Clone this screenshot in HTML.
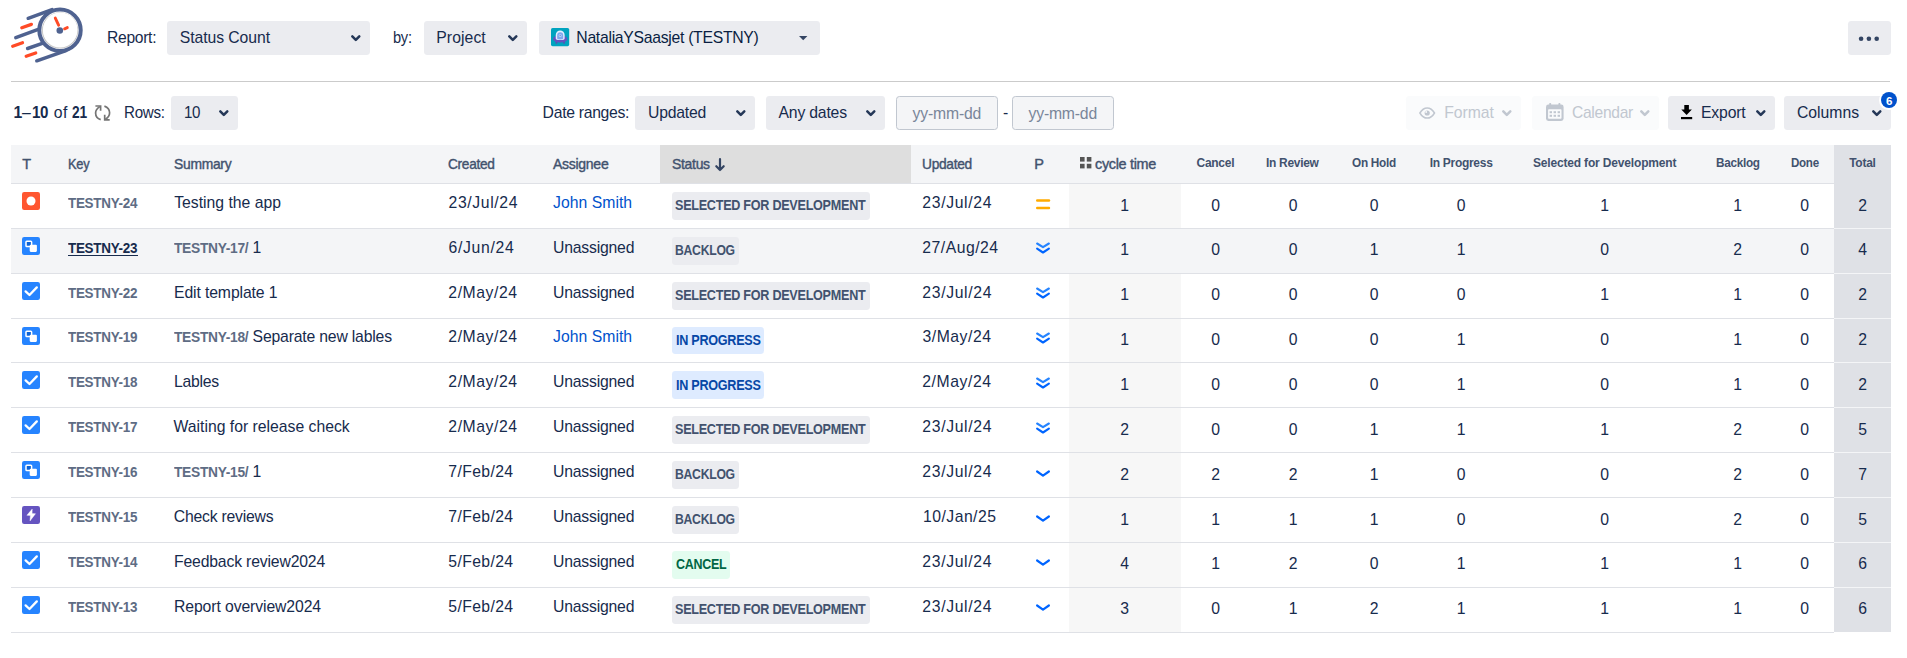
<!DOCTYPE html>
<html lang="en">
<head>
<meta charset="utf-8">
<title>Time in Status - Status Count</title>
<style>
html,body{margin:0;padding:0;background:#fff;}
body{width:1907px;height:658px;position:relative;overflow:hidden;font-family:"Liberation Sans",Arial,sans-serif;color:#172B4D;font-size:15.75px;}
.t{position:absolute;white-space:pre;line-height:20px;margin:0;padding:0;font-weight:400;transform-origin:0 50%;}
.box{position:absolute;box-sizing:border-box;border-radius:3.4px;}
.sel{background:#EBECF0;}
.dis{background:#FAFBFC;}
.inp{background:#F4F5F7;border:1.1px solid #C1C7D0;}
svg{position:absolute;overflow:visible;}
.abs{position:absolute;}
a{text-decoration:none;color:inherit;}
</style>
</head>
<body>

<svg class="logo" style="left:0;top:0" width="120" height="90" viewBox="0 0 120 90" fill="none" stroke-linecap="round">
<g stroke="#4F6290" stroke-width="3.5">
<line x1="28.2" y1="18.3" x2="52" y2="9.6"/>
<line x1="15.8" y1="37.6" x2="38.2" y2="29.4"/>
<line x1="27.6" y1="48.5" x2="42.3" y2="43.4"/>
<line x1="36.8" y1="60.8" x2="66" y2="50.6"/>
</g>
<g stroke="#FF4B26" stroke-width="3.3">
<line x1="21.8" y1="27.7" x2="31.4" y2="24.4"/>
<line x1="12.7" y1="46.2" x2="22.5" y2="42.8"/>
<line x1="26.2" y1="56.3" x2="35.7" y2="53"/>
</g>
<circle cx="60" cy="30.4" r="17.6" fill="#fff" stroke="#C9C9C9" stroke-width="1.2"/>
<circle cx="60.3" cy="29.6" r="17.2" fill="#fff" stroke="none"/>
<circle cx="60" cy="30.3" r="20.7" stroke="#4F6290" stroke-width="4"/>
<line x1="55.3" y1="18.1" x2="58.6" y2="25.2" stroke="#FF4B26" stroke-width="2.9"/>
<line x1="64.6" y1="28.8" x2="67.3" y2="27.6" stroke="#FF4B26" stroke-width="2.9"/>
<circle cx="59.8" cy="30.5" r="3.3" fill="#4F6290" stroke="none"/>
</svg>

<div class="toolbar">
<label class="t" style="left:106.50px;top:27.75px;font-size:15.75px;letter-spacing:-0.300px;transform:scaleX(0.9928);">Report:</label>
<div class="box sel" style="left:167px;top:21px;width:203px;height:33.8px"></div>
<span class="t" style="left:179.70px;top:27.75px;font-size:15.75px;letter-spacing:-0.067px;">Status Count</span>
<svg style="left:350.80px;top:34.90px" width="9.8" height="6.6" fill="none"><polyline points="1.3,1.3 4.8,4.9 8.3,1.3" stroke="#253858" stroke-width="2.5" stroke-linecap="round" stroke-linejoin="round"/></svg>
<label class="t" style="left:393.00px;top:27.75px;font-size:15.75px;letter-spacing:-0.300px;transform:scaleX(0.9302);">by:</label>
<div class="box sel" style="left:424px;top:21px;width:103px;height:33.8px"></div>
<span class="t" style="left:436.30px;top:27.75px;font-size:15.75px;letter-spacing:0.070px;">Project</span>
<svg style="left:508.30px;top:34.90px" width="9.8" height="6.6" fill="none"><polyline points="1.3,1.3 4.8,4.9 8.3,1.3" stroke="#253858" stroke-width="2.5" stroke-linecap="round" stroke-linejoin="round"/></svg>
<div class="box sel" style="left:539.2px;top:21px;width:280.8px;height:33.8px"></div>
<svg style="left:551px;top:28.1px" width="18.2" height="18.2" viewBox="0 0 18 18">
<rect width="18" height="18" rx="1.6" fill="#00A3BF"/>
<rect x="4.6" y="12.6" width="1.6" height="2.9" rx="0.5" fill="#5E4DB2"/><rect x="12.1" y="12.6" width="1.6" height="2.9" rx="0.5" fill="#5E4DB2"/>
<ellipse cx="9.1" cy="10.7" rx="7.1" ry="3.5" fill="#6554C0"/>
<path d="M4.7 10.4 V6.9 a4.4 4.4 0 0 1 8.8 0 V10.4 a4.4 1.5 0 0 1 -8.8 0 Z" fill="#E4EEFF"/>
<path d="M6.1 10.5 V7.2 a3 3 0 0 1 6 0 V10.5 a3 1 0 0 1 -6 0 Z" fill="#7FA8EE"/>
<circle cx="9.1" cy="7.4" r="1.5" fill="#B9D2FA"/><circle cx="9.1" cy="7.4" r="0.6" fill="#5B84D6"/>
<path d="M2 10.9 a7.1 3.4 0 0 0 14.2 0 a7.1 2 0 0 1 -14.2 0 Z" fill="#6554C0"/>
</svg>
<span class="t" style="left:576.30px;top:27.75px;font-size:15.75px;color:#091E42;letter-spacing:-0.286px;">NataliaYSaasjet (TESTNY)</span>
<svg style="left:799px;top:36px" width="8.4" height="4.4"><polygon points="0,0 8.4,0 4.2,4.3" fill="#344563"/></svg>
<div class="box sel" style="left:1848px;top:21px;width:42.5px;height:33.8px"></div>
<svg style="left:1858px;top:35.6px" width="22" height="6"><circle cx="3.1" cy="2.8" r="2.3" fill="#344563"/><circle cx="10.9" cy="2.8" r="2.3" fill="#344563"/><circle cx="18.7" cy="2.8" r="2.3" fill="#344563"/></svg>
</div>
<div class="abs" style="left:11.2px;top:80.6px;width:1879.3px;height:1.3px;background:#CBCBCB"></div>
<div class="controls">
<span class="pager">
<b class="t" style="left:13.40px;top:102.75px;font-size:15.75px;font-weight:700;">1</b>
<span class="t" style="left:21.90px;top:102.75px;font-size:15.75px;">–</span>
<b class="t" style="left:32.30px;top:102.75px;font-size:15.75px;font-weight:700;letter-spacing:-0.300px;transform:scaleX(0.9603);">10</b>
<span class="t" style="left:53.70px;top:102.75px;font-size:15.75px;letter-spacing:0.549px;">of</span>
<b class="t" style="left:72.00px;top:102.75px;font-size:15.75px;font-weight:700;letter-spacing:-0.300px;transform:scaleX(0.8730);">21</b>
</span>
<svg style="left:93px;top:104px" width="20" height="18" viewBox="93 104 20 18" fill="none" stroke="#757575" stroke-width="1.7">
<path d="M100.7 119.6 C97.6 118.6 95.6 116.2 95.6 112.9 C95.6 110.3 97.2 108.3 99.8 106.6"/>
<path d="M95.4 106 H100.6 V110.8"/>
<path d="M104.4 106.1 C107.6 107.3 109.6 109.7 109.6 112.8 C109.6 115.5 108.2 117.6 105.4 119.3"/>
<path d="M104.7 114.8 V119.8 H109.7"/>
</svg>
<label class="t" style="left:123.70px;top:102.75px;font-size:15.75px;letter-spacing:-0.300px;transform:scaleX(0.9628);">Rows:</label>
<div class="box sel" style="left:171px;top:96px;width:67px;height:33.8px"></div>
<span class="t" style="left:183.60px;top:102.75px;font-size:15.75px;letter-spacing:-0.300px;transform:scaleX(0.9603);">10</span>
<svg style="left:219.10px;top:109.90px" width="9.8" height="6.6" fill="none"><polyline points="1.3,1.3 4.8,4.9 8.3,1.3" stroke="#253858" stroke-width="2.5" stroke-linecap="round" stroke-linejoin="round"/></svg>
<label class="t" style="left:542.60px;top:102.75px;font-size:15.75px;letter-spacing:-0.300px;">Date ranges:</label>
<div class="box sel" style="left:635px;top:96px;width:120px;height:33.8px"></div>
<span class="t" style="left:648.00px;top:102.75px;font-size:15.75px;letter-spacing:-0.222px;">Updated</span>
<svg style="left:735.70px;top:109.90px" width="9.8" height="6.6" fill="none"><polyline points="1.3,1.3 4.8,4.9 8.3,1.3" stroke="#253858" stroke-width="2.5" stroke-linecap="round" stroke-linejoin="round"/></svg>
<div class="box sel" style="left:766px;top:96px;width:118.7px;height:33.8px"></div>
<span class="t" style="left:778.50px;top:102.75px;font-size:15.75px;letter-spacing:-0.189px;">Any dates</span>
<svg style="left:866.00px;top:109.90px" width="9.8" height="6.6" fill="none"><polyline points="1.3,1.3 4.8,4.9 8.3,1.3" stroke="#253858" stroke-width="2.5" stroke-linecap="round" stroke-linejoin="round"/></svg>
<div class="box inp" style="left:896px;top:96px;width:101.8px;height:33.8px"></div>
<span class="t" style="left:912.60px;top:103.75px;font-size:15.75px;color:#7A869A;letter-spacing:-0.187px;">yy-mm-dd</span>
<span class="t" style="left:1003.00px;top:102.75px;font-size:15.75px;">-</span>
<div class="box inp" style="left:1012px;top:96px;width:102px;height:33.8px"></div>
<span class="t" style="left:1028.50px;top:103.75px;font-size:15.75px;color:#7A869A;letter-spacing:-0.187px;">yy-mm-dd</span>
<div class="box dis" style="left:1406.2px;top:96px;width:114.7px;height:33.8px"></div>
<svg style="left:1419px;top:106.5px" width="16.4" height="12" viewBox="0 0 16.4 12" fill="none">
<path d="M0.9 6 C3 2.4 5.4 0.9 8.2 0.9 C11 0.9 13.4 2.4 15.5 6 C13.4 9.6 11 11.1 8.2 11.1 C5.4 11.1 3 9.6 0.9 6 Z" stroke="#C1C7D0" stroke-width="1.5"/>
<circle cx="8.2" cy="6" r="2.6" fill="#C1C7D0"/><circle cx="7.2" cy="5" r="0.9" fill="#FAFBFC"/></svg>
<span class="t" style="left:1444.30px;top:102.75px;font-size:15.75px;color:#C1C7D0;letter-spacing:-0.070px;">Format</span>
<svg style="left:1501.80px;top:109.90px" width="9.8" height="6.6" fill="none"><polyline points="1.3,1.3 4.8,4.9 8.3,1.3" stroke="#C1C7D0" stroke-width="2.5" stroke-linecap="round" stroke-linejoin="round"/></svg>
<div class="box dis" style="left:1532px;top:96px;width:127px;height:33.8px"></div>
<svg style="left:1545.6px;top:103px" width="17.6" height="18" viewBox="0 0 17.6 18">
<rect x="0" y="1.6" width="17.6" height="16.4" rx="2.4" fill="#C1C7D0"/>
<rect x="3.2" y="0" width="2" height="3.4" rx="0.8" fill="#C1C7D0"/><rect x="12.4" y="0" width="2" height="3.4" rx="0.8" fill="#C1C7D0"/>
<rect x="2.1" y="6.2" width="13.4" height="9.6" rx="0.8" fill="#FAFBFC"/>
<g fill="#C1C7D0"><rect x="3.6" y="8.2" width="2.4" height="2"/><rect x="7.6" y="8.2" width="2.4" height="2"/><rect x="11.6" y="8.2" width="2.4" height="2"/>
<rect x="3.6" y="11.8" width="2.4" height="2"/><rect x="7.6" y="11.8" width="2.4" height="2"/><rect x="11.6" y="11.8" width="2.4" height="2"/></g></svg>
<span class="t" style="left:1571.70px;top:102.75px;font-size:15.75px;color:#C1C7D0;letter-spacing:-0.300px;transform:scaleX(0.9912);">Calendar</span>
<svg style="left:1640.30px;top:109.90px" width="9.8" height="6.6" fill="none"><polyline points="1.3,1.3 4.8,4.9 8.3,1.3" stroke="#C1C7D0" stroke-width="2.5" stroke-linecap="round" stroke-linejoin="round"/></svg>
<div class="box sel" style="left:1668.2px;top:96px;width:106.8px;height:33.8px"></div>
<svg style="left:1681px;top:105.2px" width="11.2" height="14.4" viewBox="0 0 11.2 14.4" fill="#000">
<polygon points="3.3,0 7.9,0 7.9,4.6 10.9,4.6 5.6,9.9 0.3,4.6 3.3,4.6"/><rect x="0" y="12" width="11.2" height="2.2"/></svg>
<span class="t" style="left:1701.00px;top:102.75px;font-size:15.75px;letter-spacing:-0.163px;">Export</span>
<svg style="left:1756.40px;top:109.90px" width="9.8" height="6.6" fill="none"><polyline points="1.3,1.3 4.8,4.9 8.3,1.3" stroke="#253858" stroke-width="2.5" stroke-linecap="round" stroke-linejoin="round"/></svg>
<div class="box sel" style="left:1784px;top:96px;width:106.8px;height:33.8px"></div>
<span class="t" style="left:1797.00px;top:102.75px;font-size:15.75px;letter-spacing:-0.022px;">Columns</span>
<svg style="left:1872.00px;top:109.90px" width="9.8" height="6.6" fill="none"><polyline points="1.3,1.3 4.8,4.9 8.3,1.3" stroke="#253858" stroke-width="2.5" stroke-linecap="round" stroke-linejoin="round"/></svg>
<div class="abs" style="left:1879.4px;top:90.5px;width:19.2px;height:19.2px;border-radius:50%;background:#fff"></div>
<div class="abs" style="left:1880.8px;top:91.9px;width:16.4px;height:16.4px;border-radius:50%;background:#0052CC"></div>
<span class="t" style="left:1885.88px;top:91.25px;font-size:11.6px;font-weight:700;color:#fff;">6</span>
</div>
<div class="grid" role="table">
<div class="abs" style="left:11.0px;top:145px;width:1879.8px;height:38px;background:#F4F5F7"></div>
<div class="abs" style="left:11.0px;top:183px;width:1879.8px;height:1px;background:#DFE1E6"></div>
<div class="abs" style="left:660.1px;top:145px;width:250.8px;height:38px;background:#DEDEDE"></div>
<div class="abs" style="left:1069px;top:184px;width:111.8px;height:448px;background:#F7F7F7"></div>
<div class="abs" style="left:11.0px;top:229px;width:1879.8px;height:44px;background:#F4F5F7"></div>
<div class="abs" style="left:11.0px;top:228px;width:1879.8px;height:1px;background:#DFE1E6"></div>
<div class="abs" style="left:11.0px;top:273px;width:1879.8px;height:1px;background:#DFE1E6"></div>
<div class="abs" style="left:11.0px;top:318px;width:1879.8px;height:1px;background:#DFE1E6"></div>
<div class="abs" style="left:11.0px;top:362px;width:1879.8px;height:1px;background:#DFE1E6"></div>
<div class="abs" style="left:11.0px;top:407px;width:1879.8px;height:1px;background:#DFE1E6"></div>
<div class="abs" style="left:11.0px;top:452px;width:1879.8px;height:1px;background:#DFE1E6"></div>
<div class="abs" style="left:11.0px;top:497px;width:1879.8px;height:1px;background:#DFE1E6"></div>
<div class="abs" style="left:11.0px;top:542px;width:1879.8px;height:1px;background:#DFE1E6"></div>
<div class="abs" style="left:11.0px;top:587px;width:1879.8px;height:1px;background:#DFE1E6"></div>
<div class="abs" style="left:11.0px;top:632px;width:1823.0px;height:1px;background:#DFE1E6"></div>
<div class="abs" style="left:1834px;top:145px;width:56.8px;height:487px;background:#DFE1E6"></div>
<div class="abs" style="left:1834px;top:228px;width:56.8px;height:1px;background:#F4F5F7"></div>
<div class="abs" style="left:1834px;top:273px;width:56.8px;height:1px;background:#F4F5F7"></div>
<div class="abs" style="left:1834px;top:318px;width:56.8px;height:1px;background:#F4F5F7"></div>
<div class="abs" style="left:1834px;top:362px;width:56.8px;height:1px;background:#F4F5F7"></div>
<div class="abs" style="left:1834px;top:407px;width:56.8px;height:1px;background:#F4F5F7"></div>
<div class="abs" style="left:1834px;top:452px;width:56.8px;height:1px;background:#F4F5F7"></div>
<div class="abs" style="left:1834px;top:497px;width:56.8px;height:1px;background:#F4F5F7"></div>
<div class="abs" style="left:1834px;top:542px;width:56.8px;height:1px;background:#F4F5F7"></div>
<div class="abs" style="left:1834px;top:587px;width:56.8px;height:1px;background:#F4F5F7"></div>
<span class="t" style="left:22.20px;top:154.25px;font-size:14.5px;color:#42526E;-webkit-text-stroke:0.4px #42526E;">T</span>
<span class="t" style="left:68.30px;top:154.25px;font-size:14.5px;color:#42526E;letter-spacing:-0.300px;transform:scaleX(0.8848);-webkit-text-stroke:0.4px #42526E;">Key</span>
<span class="t" style="left:173.60px;top:154.25px;font-size:14.5px;color:#42526E;letter-spacing:-0.300px;transform:scaleX(0.9559);-webkit-text-stroke:0.4px #42526E;">Summary</span>
<span class="t" style="left:448.00px;top:154.25px;font-size:14.5px;color:#42526E;letter-spacing:-0.300px;transform:scaleX(0.9434);-webkit-text-stroke:0.4px #42526E;">Created</span>
<span class="t" style="left:552.70px;top:154.25px;font-size:14.5px;color:#42526E;letter-spacing:-0.300px;transform:scaleX(0.9676);-webkit-text-stroke:0.4px #42526E;">Assignee</span>
<span class="t" style="left:672.20px;top:154.25px;font-size:14.5px;color:#42526E;letter-spacing:-0.300px;transform:scaleX(0.9619);-webkit-text-stroke:0.4px #42526E;">Status</span>
<svg style="left:714.6px;top:157.6px" width="10" height="14" viewBox="0 0 10 14" fill="none" stroke="#344563" stroke-width="2.2" stroke-linecap="round" stroke-linejoin="round"><path d="M5 1.2 V12 M1.3 8.2 L5 12 L8.7 8.2"/></svg>
<span class="t" style="left:922.40px;top:154.25px;font-size:14.5px;color:#42526E;letter-spacing:-0.300px;transform:scaleX(0.9470);-webkit-text-stroke:0.4px #42526E;">Updated</span>
<span class="t" style="left:1034.30px;top:154.25px;font-size:14.5px;color:#42526E;-webkit-text-stroke:0.4px #42526E;">P</span>
<svg style="left:1079.9px;top:157.1px" width="11.4" height="11.4" viewBox="0 0 11.4 11.4" fill="#555"><rect x="0" y="0" width="4.6" height="4.6"/><rect x="6.8" y="0" width="4.6" height="4.6"/><rect x="0" y="6.8" width="4.6" height="4.6"/><rect x="6.8" y="6.8" width="4.6" height="4.6"/></svg>
<span class="t" style="left:1095.00px;top:154.25px;font-size:14.5px;color:#42526E;letter-spacing:-0.300px;transform:scaleX(0.9927);-webkit-text-stroke:0.4px #42526E;">cycle time</span>
<span class="t" style="left:1196.50px;top:153.25px;font-size:12px;font-weight:700;color:#42526E;letter-spacing:-0.272px;">Cancel</span>
<span class="t" style="left:1266.30px;top:153.25px;font-size:12px;font-weight:700;color:#42526E;letter-spacing:-0.300px;transform:scaleX(0.9985);">In Review</span>
<span class="t" style="left:1352.20px;top:153.25px;font-size:12px;font-weight:700;color:#42526E;letter-spacing:-0.300px;transform:scaleX(0.9826);">On Hold</span>
<span class="t" style="left:1429.70px;top:153.25px;font-size:12px;font-weight:700;color:#42526E;letter-spacing:-0.290px;">In Progress</span>
<span class="t" style="left:1532.90px;top:153.25px;font-size:12px;font-weight:700;color:#42526E;letter-spacing:-0.163px;">Selected for Development</span>
<span class="t" style="left:1715.60px;top:153.25px;font-size:12px;font-weight:700;color:#42526E;letter-spacing:-0.300px;transform:scaleX(0.9804);">Backlog</span>
<span class="t" style="left:1790.70px;top:153.25px;font-size:12px;font-weight:700;color:#42526E;letter-spacing:-0.300px;transform:scaleX(0.9656);">Done</span>
<span class="t" style="left:1849.20px;top:153.25px;font-size:12px;font-weight:700;color:#42526E;letter-spacing:-0.270px;">Total</span>
<div class="row" role="row">
<svg style="left:22.00px;top:192.05px" width="18" height="18" viewBox="0 0 18 18"><rect width="18" height="18" rx="2.2" fill="#FF5630"/><circle cx="9" cy="9" r="4.5" fill="#fff"/></svg>
<a class="t" style="left:68.40px;top:193.25px;font-size:14px;font-weight:700;color:#5E6C84;letter-spacing:-0.300px;transform:scaleX(0.9614);">TESTNY-24</a>
<span class="t" style="left:174.20px;top:192.75px;font-size:15.75px;letter-spacing:-0.005px;">Testing the app</span>
<span class="t" style="left:448.50px;top:192.75px;font-size:15.75px;letter-spacing:0.632px;">23/Jul/24</span>
<a class="t" style="left:553.10px;top:192.75px;font-size:15.75px;color:#0052CC;letter-spacing:0.019px;">John Smith</a>
<div class="box" style="left:672px;top:192.05px;width:198px;height:27.9px;background:#EBECF0"></div>
<span class="t" style="left:675.10px;top:195.25px;font-size:14px;font-weight:700;color:#42526E;letter-spacing:-0.300px;transform:scaleX(0.9008);">SELECTED FOR DEVELOPMENT</span>
<span class="t" style="left:922.30px;top:192.75px;font-size:15.75px;letter-spacing:0.657px;">23/Jul/24</span>
<svg style="left:1036px;top:198.65px" width="14.4" height="11" fill="#FFAB00"><rect x="0" y="0.2" width="14.2" height="2.5" rx="1.2"/><rect x="0" y="7.8" width="14.2" height="2.5" rx="1.2"/></svg>
<span class="t" style="left:1120.13px;top:195.75px;font-size:15.75px;">1</span>
<span class="t" style="left:1211.13px;top:195.75px;font-size:15.75px;">0</span>
<span class="t" style="left:1288.63px;top:195.75px;font-size:15.75px;">0</span>
<span class="t" style="left:1369.63px;top:195.75px;font-size:15.75px;">0</span>
<span class="t" style="left:1456.63px;top:195.75px;font-size:15.75px;">0</span>
<span class="t" style="left:1600.13px;top:195.75px;font-size:15.75px;">1</span>
<span class="t" style="left:1733.13px;top:195.75px;font-size:15.75px;">1</span>
<span class="t" style="left:1800.33px;top:195.75px;font-size:15.75px;">0</span>
<span class="t" style="left:1858.13px;top:195.75px;font-size:15.75px;">2</span>
</div>
<div class="row" role="row">
<svg style="left:22.00px;top:236.90px" width="18" height="18" viewBox="0 0 18 18"><rect width="18" height="18" rx="2.2" fill="#2684FF"/><rect x="4" y="4.2" width="5.6" height="5.4" rx="0.8" fill="#0B62D6" stroke="#fff" stroke-width="1.5"/><rect x="7.7" y="7.7" width="7.2" height="7.2" rx="1.1" fill="#fff"/></svg>
<a class="t" style="left:68.40px;top:238.25px;font-size:14px;font-weight:700;color:#172B4D;letter-spacing:-0.300px;transform:scaleX(0.9614);">TESTNY-23</a>
<div class="abs" style="left:67.8px;top:254.60px;width:70.4px;height:1.2px;background:#172B4D"></div>
<a class="t" style="left:173.60px;top:238.25px;font-size:14px;font-weight:700;color:#5E6C84;letter-spacing:-0.300px;transform:scaleX(0.9841);">TESTNY-17/</a>
<span class="t" style="left:252.60px;top:237.75px;font-size:15.75px;">1</span>
<span class="t" style="left:448.50px;top:237.75px;font-size:15.75px;letter-spacing:0.686px;">6/Jun/24</span>
<span class="t" style="left:553.10px;top:237.75px;font-size:15.75px;letter-spacing:-0.207px;">Unassigned</span>
<div class="box" style="left:672px;top:236.90px;width:66.8px;height:27.9px;background:#EBECF0"></div>
<span class="t" style="left:675.40px;top:240.25px;font-size:14px;font-weight:700;color:#42526E;letter-spacing:-0.300px;transform:scaleX(0.8714);">BACKLOG</span>
<span class="t" style="left:922.30px;top:237.75px;font-size:15.75px;letter-spacing:0.485px;">27/Aug/24</span>
<svg style="left:1035px;top:241.40px" width="16" height="14" fill="none" stroke-width="2.1" stroke-linecap="round" stroke-linejoin="round"><polyline points="2.1,2.5 8,6.2 13.9,2.5" stroke="#2684FF"/><polyline points="2.1,7.6 8,11.5 13.9,7.6" stroke="#0065FF"/></svg>
<span class="t" style="left:1120.13px;top:239.75px;font-size:15.75px;">1</span>
<span class="t" style="left:1211.13px;top:239.75px;font-size:15.75px;">0</span>
<span class="t" style="left:1288.63px;top:239.75px;font-size:15.75px;">0</span>
<span class="t" style="left:1369.63px;top:239.75px;font-size:15.75px;">1</span>
<span class="t" style="left:1456.63px;top:239.75px;font-size:15.75px;">1</span>
<span class="t" style="left:1600.13px;top:239.75px;font-size:15.75px;">0</span>
<span class="t" style="left:1733.13px;top:239.75px;font-size:15.75px;">2</span>
<span class="t" style="left:1800.33px;top:239.75px;font-size:15.75px;">0</span>
<span class="t" style="left:1858.13px;top:239.75px;font-size:15.75px;">4</span>
</div>
<div class="row" role="row">
<svg style="left:22.00px;top:281.75px" width="18" height="18" viewBox="0 0 18 18"><rect width="18" height="18" rx="2.2" fill="#2684FF"/><polyline points="3.6,9.4 7.5,13 14.8,5.4" fill="none" stroke="#fff" stroke-width="2.3" stroke-linecap="round" stroke-linejoin="round"/></svg>
<a class="t" style="left:68.40px;top:283.25px;font-size:14px;font-weight:700;color:#5E6C84;letter-spacing:-0.300px;transform:scaleX(0.9614);">TESTNY-22</a>
<span class="t" style="left:174.00px;top:282.75px;font-size:15.75px;letter-spacing:-0.111px;">Edit template 1</span>
<span class="t" style="left:448.30px;top:282.75px;font-size:15.75px;letter-spacing:0.570px;">2/May/24</span>
<span class="t" style="left:553.10px;top:282.75px;font-size:15.75px;letter-spacing:-0.207px;">Unassigned</span>
<div class="box" style="left:672px;top:281.75px;width:198px;height:27.9px;background:#EBECF0"></div>
<span class="t" style="left:675.10px;top:285.25px;font-size:14px;font-weight:700;color:#42526E;letter-spacing:-0.300px;transform:scaleX(0.9008);">SELECTED FOR DEVELOPMENT</span>
<span class="t" style="left:922.30px;top:282.75px;font-size:15.75px;letter-spacing:0.657px;">23/Jul/24</span>
<svg style="left:1035px;top:286.25px" width="16" height="14" fill="none" stroke-width="2.1" stroke-linecap="round" stroke-linejoin="round"><polyline points="2.1,2.5 8,6.2 13.9,2.5" stroke="#2684FF"/><polyline points="2.1,7.6 8,11.5 13.9,7.6" stroke="#0065FF"/></svg>
<span class="t" style="left:1120.13px;top:284.75px;font-size:15.75px;">1</span>
<span class="t" style="left:1211.13px;top:284.75px;font-size:15.75px;">0</span>
<span class="t" style="left:1288.63px;top:284.75px;font-size:15.75px;">0</span>
<span class="t" style="left:1369.63px;top:284.75px;font-size:15.75px;">0</span>
<span class="t" style="left:1456.63px;top:284.75px;font-size:15.75px;">0</span>
<span class="t" style="left:1600.13px;top:284.75px;font-size:15.75px;">1</span>
<span class="t" style="left:1733.13px;top:284.75px;font-size:15.75px;">1</span>
<span class="t" style="left:1800.33px;top:284.75px;font-size:15.75px;">0</span>
<span class="t" style="left:1858.13px;top:284.75px;font-size:15.75px;">2</span>
</div>
<div class="row" role="row">
<svg style="left:22.00px;top:326.60px" width="18" height="18" viewBox="0 0 18 18"><rect width="18" height="18" rx="2.2" fill="#2684FF"/><rect x="4" y="4.2" width="5.6" height="5.4" rx="0.8" fill="#0B62D6" stroke="#fff" stroke-width="1.5"/><rect x="7.7" y="7.7" width="7.2" height="7.2" rx="1.1" fill="#fff"/></svg>
<a class="t" style="left:68.40px;top:327.25px;font-size:14px;font-weight:700;color:#5E6C84;letter-spacing:-0.300px;transform:scaleX(0.9614);">TESTNY-19</a>
<a class="t" style="left:173.60px;top:327.25px;font-size:14px;font-weight:700;color:#5E6C84;letter-spacing:-0.300px;transform:scaleX(0.9841);">TESTNY-18/</a>
<span class="t" style="left:252.60px;top:326.75px;font-size:15.75px;letter-spacing:-0.183px;">Separate new lables</span>
<span class="t" style="left:448.30px;top:326.75px;font-size:15.75px;letter-spacing:0.570px;">2/May/24</span>
<a class="t" style="left:553.10px;top:326.75px;font-size:15.75px;color:#0052CC;letter-spacing:0.019px;">John Smith</a>
<div class="box" style="left:672px;top:326.60px;width:91.9px;height:27.9px;background:#DEEBFF"></div>
<span class="t" style="left:675.60px;top:330.25px;font-size:14px;font-weight:700;color:#0747A6;letter-spacing:-0.300px;transform:scaleX(0.9010);">IN PROGRESS</span>
<span class="t" style="left:922.50px;top:326.75px;font-size:15.75px;letter-spacing:0.527px;">3/May/24</span>
<svg style="left:1035px;top:331.10px" width="16" height="14" fill="none" stroke-width="2.1" stroke-linecap="round" stroke-linejoin="round"><polyline points="2.1,2.5 8,6.2 13.9,2.5" stroke="#2684FF"/><polyline points="2.1,7.6 8,11.5 13.9,7.6" stroke="#0065FF"/></svg>
<span class="t" style="left:1120.13px;top:329.75px;font-size:15.75px;">1</span>
<span class="t" style="left:1211.13px;top:329.75px;font-size:15.75px;">0</span>
<span class="t" style="left:1288.63px;top:329.75px;font-size:15.75px;">0</span>
<span class="t" style="left:1369.63px;top:329.75px;font-size:15.75px;">0</span>
<span class="t" style="left:1456.63px;top:329.75px;font-size:15.75px;">1</span>
<span class="t" style="left:1600.13px;top:329.75px;font-size:15.75px;">0</span>
<span class="t" style="left:1733.13px;top:329.75px;font-size:15.75px;">1</span>
<span class="t" style="left:1800.33px;top:329.75px;font-size:15.75px;">0</span>
<span class="t" style="left:1858.13px;top:329.75px;font-size:15.75px;">2</span>
</div>
<div class="row" role="row">
<svg style="left:22.00px;top:371.45px" width="18" height="18" viewBox="0 0 18 18"><rect width="18" height="18" rx="2.2" fill="#2684FF"/><polyline points="3.6,9.4 7.5,13 14.8,5.4" fill="none" stroke="#fff" stroke-width="2.3" stroke-linecap="round" stroke-linejoin="round"/></svg>
<a class="t" style="left:68.40px;top:372.25px;font-size:14px;font-weight:700;color:#5E6C84;letter-spacing:-0.300px;transform:scaleX(0.9614);">TESTNY-18</a>
<span class="t" style="left:174.00px;top:371.75px;font-size:15.75px;letter-spacing:-0.257px;">Lables</span>
<span class="t" style="left:448.30px;top:371.75px;font-size:15.75px;letter-spacing:0.570px;">2/May/24</span>
<span class="t" style="left:553.10px;top:371.75px;font-size:15.75px;letter-spacing:-0.207px;">Unassigned</span>
<div class="box" style="left:672px;top:371.45px;width:91.9px;height:27.9px;background:#DEEBFF"></div>
<span class="t" style="left:675.60px;top:375.25px;font-size:14px;font-weight:700;color:#0747A6;letter-spacing:-0.300px;transform:scaleX(0.9010);">IN PROGRESS</span>
<span class="t" style="left:922.30px;top:371.75px;font-size:15.75px;letter-spacing:0.556px;">2/May/24</span>
<svg style="left:1035px;top:375.95px" width="16" height="14" fill="none" stroke-width="2.1" stroke-linecap="round" stroke-linejoin="round"><polyline points="2.1,2.5 8,6.2 13.9,2.5" stroke="#2684FF"/><polyline points="2.1,7.6 8,11.5 13.9,7.6" stroke="#0065FF"/></svg>
<span class="t" style="left:1120.13px;top:374.75px;font-size:15.75px;">1</span>
<span class="t" style="left:1211.13px;top:374.75px;font-size:15.75px;">0</span>
<span class="t" style="left:1288.63px;top:374.75px;font-size:15.75px;">0</span>
<span class="t" style="left:1369.63px;top:374.75px;font-size:15.75px;">0</span>
<span class="t" style="left:1456.63px;top:374.75px;font-size:15.75px;">1</span>
<span class="t" style="left:1600.13px;top:374.75px;font-size:15.75px;">0</span>
<span class="t" style="left:1733.13px;top:374.75px;font-size:15.75px;">1</span>
<span class="t" style="left:1800.33px;top:374.75px;font-size:15.75px;">0</span>
<span class="t" style="left:1858.13px;top:374.75px;font-size:15.75px;">2</span>
</div>
<div class="row" role="row">
<svg style="left:22.00px;top:416.30px" width="18" height="18" viewBox="0 0 18 18"><rect width="18" height="18" rx="2.2" fill="#2684FF"/><polyline points="3.6,9.4 7.5,13 14.8,5.4" fill="none" stroke="#fff" stroke-width="2.3" stroke-linecap="round" stroke-linejoin="round"/></svg>
<a class="t" style="left:68.40px;top:417.25px;font-size:14px;font-weight:700;color:#5E6C84;letter-spacing:-0.300px;transform:scaleX(0.9614);">TESTNY-17</a>
<span class="t" style="left:173.60px;top:416.75px;font-size:15.75px;letter-spacing:-0.009px;">Waiting for release check</span>
<span class="t" style="left:448.30px;top:416.75px;font-size:15.75px;letter-spacing:0.570px;">2/May/24</span>
<span class="t" style="left:553.10px;top:416.75px;font-size:15.75px;letter-spacing:-0.207px;">Unassigned</span>
<div class="box" style="left:672px;top:416.30px;width:198px;height:27.9px;background:#EBECF0"></div>
<span class="t" style="left:675.10px;top:419.25px;font-size:14px;font-weight:700;color:#42526E;letter-spacing:-0.300px;transform:scaleX(0.9008);">SELECTED FOR DEVELOPMENT</span>
<span class="t" style="left:922.30px;top:416.75px;font-size:15.75px;letter-spacing:0.657px;">23/Jul/24</span>
<svg style="left:1035px;top:420.80px" width="16" height="14" fill="none" stroke-width="2.1" stroke-linecap="round" stroke-linejoin="round"><polyline points="2.1,2.5 8,6.2 13.9,2.5" stroke="#2684FF"/><polyline points="2.1,7.6 8,11.5 13.9,7.6" stroke="#0065FF"/></svg>
<span class="t" style="left:1120.13px;top:419.75px;font-size:15.75px;">2</span>
<span class="t" style="left:1211.13px;top:419.75px;font-size:15.75px;">0</span>
<span class="t" style="left:1288.63px;top:419.75px;font-size:15.75px;">0</span>
<span class="t" style="left:1369.63px;top:419.75px;font-size:15.75px;">1</span>
<span class="t" style="left:1456.63px;top:419.75px;font-size:15.75px;">1</span>
<span class="t" style="left:1600.13px;top:419.75px;font-size:15.75px;">1</span>
<span class="t" style="left:1733.13px;top:419.75px;font-size:15.75px;">2</span>
<span class="t" style="left:1800.33px;top:419.75px;font-size:15.75px;">0</span>
<span class="t" style="left:1858.13px;top:419.75px;font-size:15.75px;">5</span>
</div>
<div class="row" role="row">
<svg style="left:22.00px;top:461.15px" width="18" height="18" viewBox="0 0 18 18"><rect width="18" height="18" rx="2.2" fill="#2684FF"/><rect x="4" y="4.2" width="5.6" height="5.4" rx="0.8" fill="#0B62D6" stroke="#fff" stroke-width="1.5"/><rect x="7.7" y="7.7" width="7.2" height="7.2" rx="1.1" fill="#fff"/></svg>
<a class="t" style="left:68.40px;top:462.25px;font-size:14px;font-weight:700;color:#5E6C84;letter-spacing:-0.300px;transform:scaleX(0.9614);">TESTNY-16</a>
<a class="t" style="left:173.60px;top:462.25px;font-size:14px;font-weight:700;color:#5E6C84;letter-spacing:-0.300px;transform:scaleX(0.9841);">TESTNY-15/</a>
<span class="t" style="left:252.60px;top:461.75px;font-size:15.75px;">1</span>
<span class="t" style="left:448.30px;top:461.75px;font-size:15.75px;letter-spacing:0.381px;">7/Feb/24</span>
<span class="t" style="left:553.10px;top:461.75px;font-size:15.75px;letter-spacing:-0.207px;">Unassigned</span>
<div class="box" style="left:672px;top:461.15px;width:66.8px;height:27.9px;background:#EBECF0"></div>
<span class="t" style="left:675.40px;top:464.25px;font-size:14px;font-weight:700;color:#42526E;letter-spacing:-0.300px;transform:scaleX(0.8714);">BACKLOG</span>
<span class="t" style="left:922.30px;top:461.75px;font-size:15.75px;letter-spacing:0.657px;">23/Jul/24</span>
<svg style="left:1035px;top:468.65px" width="16" height="10" fill="none" stroke-width="2.2" stroke-linecap="round" stroke-linejoin="round"><polyline points="2.1,2.5 8,6.6 13.9,2.5" stroke="#0065FF"/></svg>
<span class="t" style="left:1120.13px;top:464.75px;font-size:15.75px;">2</span>
<span class="t" style="left:1211.13px;top:464.75px;font-size:15.75px;">2</span>
<span class="t" style="left:1288.63px;top:464.75px;font-size:15.75px;">2</span>
<span class="t" style="left:1369.63px;top:464.75px;font-size:15.75px;">1</span>
<span class="t" style="left:1456.63px;top:464.75px;font-size:15.75px;">0</span>
<span class="t" style="left:1600.13px;top:464.75px;font-size:15.75px;">0</span>
<span class="t" style="left:1733.13px;top:464.75px;font-size:15.75px;">2</span>
<span class="t" style="left:1800.33px;top:464.75px;font-size:15.75px;">0</span>
<span class="t" style="left:1858.13px;top:464.75px;font-size:15.75px;">7</span>
</div>
<div class="row" role="row">
<svg style="left:22.00px;top:506.00px" width="18" height="18" viewBox="0 0 18 18"><rect width="18" height="18" rx="2.2" fill="#6554C0"/><polygon points="10.2,3 4.9,9.3 8.4,9.5 8,14.9 13.5,7.7 10.1,7.6" fill="#fff" stroke="#fff" stroke-width="0.4" stroke-linejoin="round"/></svg>
<a class="t" style="left:68.40px;top:507.25px;font-size:14px;font-weight:700;color:#5E6C84;letter-spacing:-0.300px;transform:scaleX(0.9614);">TESTNY-15</a>
<span class="t" style="left:173.80px;top:506.75px;font-size:15.75px;letter-spacing:-0.223px;">Check reviews</span>
<span class="t" style="left:448.30px;top:506.75px;font-size:15.75px;letter-spacing:0.381px;">7/Feb/24</span>
<span class="t" style="left:553.10px;top:506.75px;font-size:15.75px;letter-spacing:-0.207px;">Unassigned</span>
<div class="box" style="left:672px;top:506.00px;width:66.8px;height:27.9px;background:#EBECF0"></div>
<span class="t" style="left:675.40px;top:509.25px;font-size:14px;font-weight:700;color:#42526E;letter-spacing:-0.300px;transform:scaleX(0.8714);">BACKLOG</span>
<span class="t" style="left:923.00px;top:506.75px;font-size:15.75px;letter-spacing:0.472px;">10/Jan/25</span>
<svg style="left:1035px;top:513.50px" width="16" height="10" fill="none" stroke-width="2.2" stroke-linecap="round" stroke-linejoin="round"><polyline points="2.1,2.5 8,6.6 13.9,2.5" stroke="#0065FF"/></svg>
<span class="t" style="left:1120.13px;top:509.75px;font-size:15.75px;">1</span>
<span class="t" style="left:1211.13px;top:509.75px;font-size:15.75px;">1</span>
<span class="t" style="left:1288.63px;top:509.75px;font-size:15.75px;">1</span>
<span class="t" style="left:1369.63px;top:509.75px;font-size:15.75px;">1</span>
<span class="t" style="left:1456.63px;top:509.75px;font-size:15.75px;">0</span>
<span class="t" style="left:1600.13px;top:509.75px;font-size:15.75px;">0</span>
<span class="t" style="left:1733.13px;top:509.75px;font-size:15.75px;">2</span>
<span class="t" style="left:1800.33px;top:509.75px;font-size:15.75px;">0</span>
<span class="t" style="left:1858.13px;top:509.75px;font-size:15.75px;">5</span>
</div>
<div class="row" role="row">
<svg style="left:22.00px;top:550.85px" width="18" height="18" viewBox="0 0 18 18"><rect width="18" height="18" rx="2.2" fill="#2684FF"/><polyline points="3.6,9.4 7.5,13 14.8,5.4" fill="none" stroke="#fff" stroke-width="2.3" stroke-linecap="round" stroke-linejoin="round"/></svg>
<a class="t" style="left:68.40px;top:552.25px;font-size:14px;font-weight:700;color:#5E6C84;letter-spacing:-0.300px;transform:scaleX(0.9614);">TESTNY-14</a>
<span class="t" style="left:174.00px;top:551.75px;font-size:15.75px;letter-spacing:-0.162px;">Feedback review2024</span>
<span class="t" style="left:448.30px;top:551.75px;font-size:15.75px;letter-spacing:0.381px;">5/Feb/24</span>
<span class="t" style="left:553.10px;top:551.75px;font-size:15.75px;letter-spacing:-0.207px;">Unassigned</span>
<div class="box" style="left:672px;top:550.85px;width:57.7px;height:27.9px;background:#E3FCEF"></div>
<span class="t" style="left:675.60px;top:554.25px;font-size:14px;font-weight:700;color:#006644;letter-spacing:-0.300px;transform:scaleX(0.8907);">CANCEL</span>
<span class="t" style="left:922.30px;top:551.75px;font-size:15.75px;letter-spacing:0.657px;">23/Jul/24</span>
<svg style="left:1035px;top:558.35px" width="16" height="10" fill="none" stroke-width="2.2" stroke-linecap="round" stroke-linejoin="round"><polyline points="2.1,2.5 8,6.6 13.9,2.5" stroke="#0065FF"/></svg>
<span class="t" style="left:1120.13px;top:553.75px;font-size:15.75px;">4</span>
<span class="t" style="left:1211.13px;top:553.75px;font-size:15.75px;">1</span>
<span class="t" style="left:1288.63px;top:553.75px;font-size:15.75px;">2</span>
<span class="t" style="left:1369.63px;top:553.75px;font-size:15.75px;">0</span>
<span class="t" style="left:1456.63px;top:553.75px;font-size:15.75px;">1</span>
<span class="t" style="left:1600.13px;top:553.75px;font-size:15.75px;">1</span>
<span class="t" style="left:1733.13px;top:553.75px;font-size:15.75px;">1</span>
<span class="t" style="left:1800.33px;top:553.75px;font-size:15.75px;">0</span>
<span class="t" style="left:1858.13px;top:553.75px;font-size:15.75px;">6</span>
</div>
<div class="row" role="row">
<svg style="left:22.00px;top:595.70px" width="18" height="18" viewBox="0 0 18 18"><rect width="18" height="18" rx="2.2" fill="#2684FF"/><polyline points="3.6,9.4 7.5,13 14.8,5.4" fill="none" stroke="#fff" stroke-width="2.3" stroke-linecap="round" stroke-linejoin="round"/></svg>
<a class="t" style="left:68.40px;top:597.25px;font-size:14px;font-weight:700;color:#5E6C84;letter-spacing:-0.300px;transform:scaleX(0.9614);">TESTNY-13</a>
<span class="t" style="left:174.00px;top:596.75px;font-size:15.75px;letter-spacing:-0.097px;">Report overview2024</span>
<span class="t" style="left:448.30px;top:596.75px;font-size:15.75px;letter-spacing:0.381px;">5/Feb/24</span>
<span class="t" style="left:553.10px;top:596.75px;font-size:15.75px;letter-spacing:-0.207px;">Unassigned</span>
<div class="box" style="left:672px;top:595.70px;width:198px;height:27.9px;background:#EBECF0"></div>
<span class="t" style="left:675.10px;top:599.25px;font-size:14px;font-weight:700;color:#42526E;letter-spacing:-0.300px;transform:scaleX(0.9008);">SELECTED FOR DEVELOPMENT</span>
<span class="t" style="left:922.30px;top:596.75px;font-size:15.75px;letter-spacing:0.657px;">23/Jul/24</span>
<svg style="left:1035px;top:603.20px" width="16" height="10" fill="none" stroke-width="2.2" stroke-linecap="round" stroke-linejoin="round"><polyline points="2.1,2.5 8,6.6 13.9,2.5" stroke="#0065FF"/></svg>
<span class="t" style="left:1120.13px;top:598.75px;font-size:15.75px;">3</span>
<span class="t" style="left:1211.13px;top:598.75px;font-size:15.75px;">0</span>
<span class="t" style="left:1288.63px;top:598.75px;font-size:15.75px;">1</span>
<span class="t" style="left:1369.63px;top:598.75px;font-size:15.75px;">2</span>
<span class="t" style="left:1456.63px;top:598.75px;font-size:15.75px;">1</span>
<span class="t" style="left:1600.13px;top:598.75px;font-size:15.75px;">1</span>
<span class="t" style="left:1733.13px;top:598.75px;font-size:15.75px;">1</span>
<span class="t" style="left:1800.33px;top:598.75px;font-size:15.75px;">0</span>
<span class="t" style="left:1858.13px;top:598.75px;font-size:15.75px;">6</span>
</div>
</div>
</body>
</html>
